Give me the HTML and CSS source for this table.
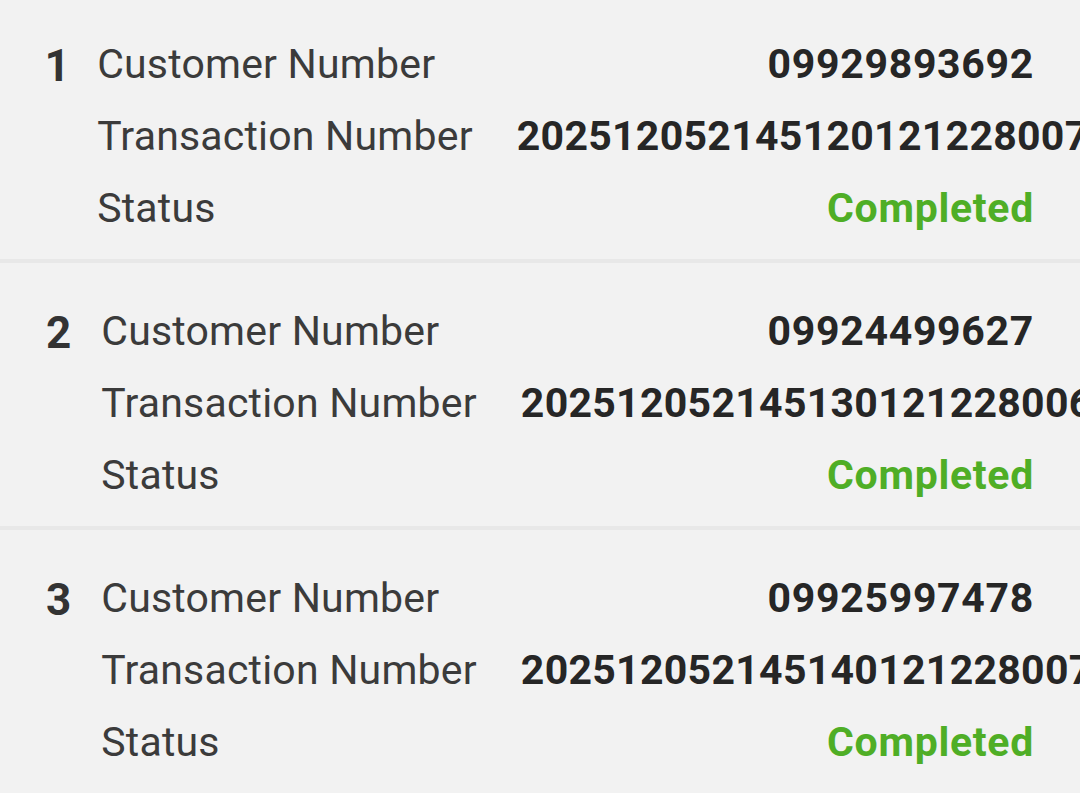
FILE: index.html
```html
<!DOCTYPE html>
<html lang="en">
<head>
<meta charset="utf-8">
<title>Transactions</title>
<link rel="stylesheet" href="styles.css">
</head>
<body>
<div class="list">
  <div class="card">
    <div class="idx">1</div>
    <div class="fields">
      <div class="label">Customer Number</div>
      <div class="value">09929893692</div>
      <div class="label">Transaction Number</div>
      <div class="value txn">2025120521451201212280078</div>
      <div class="label">Status</div>
      <div class="value ok">Completed</div>
    </div>
  </div>
  <div class="card">
    <div class="idx">2</div>
    <div class="fields">
      <div class="label">Customer Number</div>
      <div class="value">09924499627</div>
      <div class="label">Transaction Number</div>
      <div class="value txn">2025120521451301212280069</div>
      <div class="label">Status</div>
      <div class="value ok">Completed</div>
    </div>
  </div>
  <div class="card">
    <div class="idx">3</div>
    <div class="fields">
      <div class="label">Customer Number</div>
      <div class="value">09925997478</div>
      <div class="label">Transaction Number</div>
      <div class="value txn">2025120521451401212280071</div>
      <div class="label">Status</div>
      <div class="value ok">Completed</div>
    </div>
  </div>
</div>
</body>
</html>
```

FILE: styles.css
```css
html, body {
  margin: 0;
  padding: 0;
  background: #f2f2f2;
  overflow: hidden;
  height: 100%;
}
body {
  font-family: Roboto, "Liberation Sans", sans-serif;
}
.list {
  margin-top: -4px;
}
.card {
  display: flex;
  align-items: flex-start;
  column-gap: 30px;
  height: 267px;
  box-sizing: border-box;
  padding: 32px 47px 0 46px;
  border-bottom: 4px solid #e8e8e8;
}
.idx {
  font-size: 44px;
  font-weight: 700;
  line-height: 72px;
  margin-top: 2px;
  color: #333333;
  font-variant-numeric: proportional-nums;
}
.fields {
  flex: 1;
  min-width: 0;
  display: grid;
  grid-template-columns: auto minmax(0, 1fr);
  column-gap: 44px;
}
.label {
  font-size: 41px;
  line-height: 72px;
  color: #3b3b3b;
  white-space: nowrap;
  letter-spacing: 0.2px;
}
.value {
  font-size: 41px;
  font-weight: 700;
  line-height: 72px;
  color: #262626;
  text-align: right;
  white-space: nowrap;
  letter-spacing: 0.7px;
  margin-right: -1px;
}
.value.txn {
  letter-spacing: 0.3px;
}
.value.ok {
  color: #4fae26;
}
```
